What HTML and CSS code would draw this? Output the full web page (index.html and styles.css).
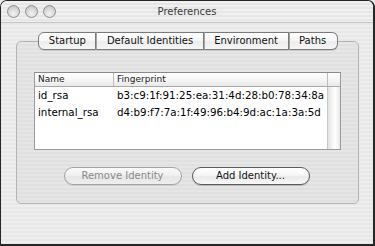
FILE: index.html
```html
<!DOCTYPE html>
<html>
<head>
<meta charset="utf-8">
<link rel="stylesheet" href="styles.css">
</head>
<body>
<div class="window">
  <div class="titlebar">
    <div class="lights">
      <span class="light"></span><span class="light"></span><span class="light"></span>
    </div>
    <div class="title">Preferences</div>
    <div></div>
  </div>
  <div class="content">
    <div class="tabs">
      <div class="tab first">Startup</div>
      <div class="tab">Default Identities</div>
      <div class="tab">Environment</div>
      <div class="tab last">Paths</div>
    </div>
    <div class="groupbox">
      <div class="table">
        <div class="thead">
          <div class="hc name">Name</div>
          <div class="hc fp">Fingerprint</div>
          <div class="hc corner"></div>
        </div>
        <div class="tbody">
          <div class="rows">
            <div class="row"><div class="cell name">id_rsa</div><div class="cell fp">b3:c9:1f:91:25:ea:31:4d:28:b0:78:34:8a</div></div>
            <div class="row"><div class="cell name">internal_rsa</div><div class="cell fp">d4:b9:f7:7a:1f:49:96:b4:9d:ac:1a:3a:5d</div></div>
          </div>
          <div class="scroll"></div>
        </div>
      </div>
      <div class="buttons">
        <div class="btn disabled">Remove Identity</div>
        <div class="btn">Add Identity...</div>
      </div>
    </div>
  </div>
</div>
</body>
</html>
```
FILE: styles.css
```css
html, body {
  margin: 0;
  padding: 0;
  background: #ececec;
}
body {
  font-family: "DejaVu Sans", sans-serif;
  font-size: 10px;
  color: #111;
}
.window {
  box-sizing: border-box;
  width: 375px;
  height: 246px;
  border: 1px solid #262626;
  border-bottom-width: 2px;
  border-right-width: 2px;
  border-radius: 7px 7px 0 0;
  overflow: hidden;
  background: repeating-linear-gradient(to bottom, #eeeeee 0 2px, #e7e7e7 2px 4px);
  display: flex;
  flex-direction: column;
}
.titlebar {
  height: 21px;
  border-bottom: 1px solid #c4c4c4;
  display: grid;
  grid-template-columns: 1fr auto 1fr;
  align-items: center;
  background: repeating-linear-gradient(to bottom, #f0f0f0 0 2px, #e6e6e6 2px 4px);
}
.lights {
  display: flex;
  gap: 5px;
  padding-left: 6px;
  padding-bottom: 1px;
}
.light {
  box-sizing: border-box;
  width: 13px;
  height: 13px;
  border-radius: 50%;
  border: 1px solid #8e8e8e;
  background: radial-gradient(circle at 50% 70%, #f4f4f4 0, #dcdcdc 45%, #b9b9b9 100%);
}
.title {
  color: #3a3a3a;
  font-size: 10px;
  padding-bottom: 1px;
}
.content {
  padding: 9px 14px 0 15px;
  display: flex;
  flex-direction: column;
}
.tabs {
  align-self: center;
  display: flex;
  height: 18px;
  margin-bottom: -9px;
  margin-left: 1px;
  position: relative;
  z-index: 1;
}
.tab {
  box-sizing: border-box;
  height: 18px;
  line-height: 16px;
  padding: 0 9.5px;
  border: 1px solid #7b7b7b;
  border-left: 1px solid #a4a4a4;
  background: linear-gradient(to bottom, #ffffff 0, #f7f7f7 45%, #ececec 55%, #f6f6f6 100%);
  color: #111;
  white-space: nowrap;
  box-shadow: 0 1px 0 rgba(0,0,0,0.12);
}
.tab.first {
  border-left: 1px solid #7b7b7b;
  border-radius: 6px 0 0 6px;
}
.tab.last {
  border-radius: 0 6px 6px 0;
  padding-right: 10.5px;
}
.groupbox {
  box-sizing: border-box;
  height: 163px;
  border: 1px solid #b4b4b4;
  border-radius: 5px;
  background: repeating-linear-gradient(to bottom, #e6e6e6 0 2px, #e0e0e0 2px 4px);
  padding: 30px 18px 0 17px;
  display: flex;
  flex-direction: column;
}
.table {
  box-sizing: border-box;
  width: 307px;
  height: 78px;
  border: 1px solid #9a9a9a;
  border-top-color: #8a8a8a;
  background: #fff;
  display: flex;
  flex-direction: column;
  overflow: hidden;
}
.thead {
  display: grid;
  grid-template-columns: 79px 214px 12px;
  height: 13px;
  border-bottom: 1px solid #a9a9a9;
  background: linear-gradient(to bottom, #ffffff 0, #f6f6f6 50%, #e9e9e9 100%);
}
.hc {
  font-size: 9px;
  line-height: 13px;
  color: #1a1a1a;
  padding-left: 3px;
  border-right: 1px solid #bdbdbd;
  white-space: nowrap;
  overflow: hidden;
}
.hc.corner {
  border-right: none;
  padding: 0;
}
.tbody {
  flex: 1;
  display: grid;
  grid-template-columns: 292px 13px;
}
.rows {
  display: flex;
  flex-direction: column;
  overflow: hidden;
}
.row {
  display: grid;
  grid-template-columns: 79px 213px;
  height: 17px;
}
.cell {
  white-space: nowrap;
  overflow: hidden;
  color: #000;
  font-size: 10.3px;
  line-height: 17px;
}
.cell.name {
  padding-left: 3px;
}
.cell.fp {
  padding-left: 3px;
}
.scroll {
  border-left: 1px solid #c8c8c8;
  background: linear-gradient(to right, #e2e2e2 0, #f6f6f6 35%, #ffffff 60%, #e8e8e8 100%);
}
.buttons {
  display: flex;
  justify-content: center;
  gap: 10px;
  margin-top: 17px;
  margin-left: -1px;
}
.btn {
  box-sizing: border-box;
  width: 118px;
  height: 18px;
  border-radius: 9px;
  border: 1px solid #5a5a5a;
  background: linear-gradient(to bottom, #ffffff 0, #f7f7f7 45%, #e9e9e9 55%, #f8f8f8 100%);
  text-align: center;
  line-height: 16px;
  color: #111;
  box-shadow: 0 1px 1px rgba(0,0,0,0.18);
}
.btn.disabled {
  border-color: #a3a3a3;
  color: #888;
  background: linear-gradient(to bottom, #fafafa 0, #f0f0f0 45%, #e6e6e6 55%, #eeeeee 100%);
  box-shadow: 0 1px 0 rgba(0,0,0,0.08);
}
```
